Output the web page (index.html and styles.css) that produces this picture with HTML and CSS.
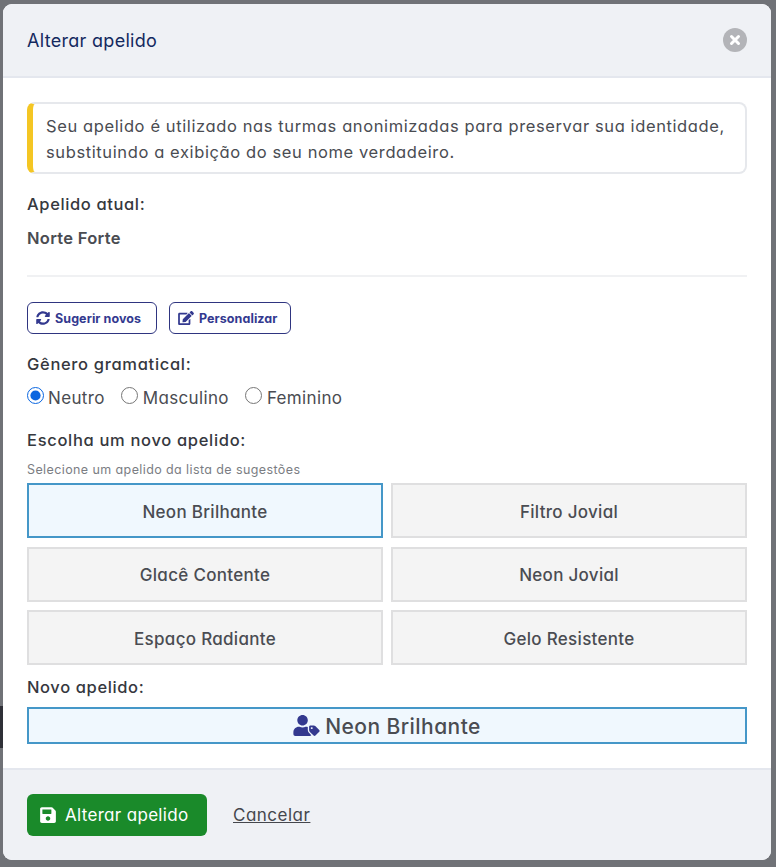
FILE: index.html
```html
<!DOCTYPE html>
<html lang="pt-BR">
<head>
<meta charset="utf-8">
<title>Alterar apelido</title>
<link rel="stylesheet" href="styles.css">
</head>
<body>
<div class="backdrop">
  <span class="behind"></span>
  <div class="dialog">
    <header class="dialog-header">
      <h1 class="dialog-title">Alterar apelido</h1>
      <span class="close"><svg viewBox="0 0 24 24" class="close-x"><path d="M8.5 8.5l7 7M15.5 8.5l-7 7"/></svg></span>
    </header>
    <main class="dialog-body">
      <div class="notice">Seu apelido é utilizado nas turmas anonimizadas para preservar sua identidade, substituindo a exibição do seu nome verdadeiro.</div>
      <div class="label current-label">Apelido atual:</div>
      <div class="current">Norte Forte</div>
      <hr class="rule">
      <div class="actions">
        <button class="outline s1"><svg class="ic" viewBox="0 0 512 512"><path d="M370.72 133.28C339.458 104.008 298.888 87.962 255.848 88c-77.458.068-144.328 53.178-162.791 126.85-1.344 5.363-6.122 9.15-11.651 9.15H24.103c-7.498 0-13.194-6.807-11.807-14.176C33.933 94.924 134.813 8 256 8c66.448 0 126.791 26.136 171.315 68.685L463.03 40.97C478.149 25.851 504 36.559 504 57.941V192c0 13.255-10.745 24-24 24H345.941c-21.382 0-32.09-25.851-16.971-40.971l41.75-41.749zM32 296h134.059c21.382 0 32.09 25.851 16.971 40.971l-41.75 41.75c31.262 29.273 71.835 45.319 114.876 45.28 77.418-.07 144.315-53.144 162.787-126.849 1.344-5.363 6.122-9.15 11.651-9.15h57.304c7.498 0 13.194 6.807 11.807 14.176C478.067 417.076 377.187 504 256 504c-66.448 0-126.791-26.136-171.315-68.685L48.97 471.03C33.851 486.149 8 475.441 8 454.059V320c0-13.255 10.745-24 24-24z"/></svg>Sugerir novos</button>
        <button class="outline s2"><svg class="ic ic-edit" viewBox="0 0 576 512"><path d="M402.6 83.2l90.2 90.2c3.8 3.8 3.8 10 0 13.8L274.4 405.6l-92.8 10.3c-12.4 1.4-22.9-9.1-21.5-21.5l10.3-92.8L388.8 83.2c3.8-3.8 10-3.8 13.8 0zm162-22.9l-48.8-48.8c-15.2-15.2-39.9-15.2-55.2 0l-35.4 35.4c-3.8 3.8-3.8 10 0 13.8l90.2 90.2c3.8 3.8 10 3.8 13.8 0l35.4-35.4c15.2-15.3 15.2-40 0-55.2zM384 346.2V448H64V128h229.8c3.2 0 6.2-1.3 8.5-3.5l40-40c7.6-7.6 2.2-20.5-8.5-20.5H48C21.5 64 0 85.5 0 112v352c0 26.5 21.5 48 48 48h352c26.5 0 48-21.5 48-48V306.2c0-10.7-12.9-16-20.5-8.5l-40 40c-2.2 2.3-3.5 5.3-3.5 8.5z"/></svg>Personalizar</button>
      </div>
      <div class="label gender-label">Gênero gramatical:</div>
      <div class="radios">
        <label class="radio"><input type="radio" name="g" checked>Neutro</label>
        <label class="radio"><input type="radio" name="g">Masculino</label>
        <label class="radio"><input type="radio" name="g">Feminino</label>
      </div>
      <div class="label choose-label">Escolha um novo apelido:</div>
      <div class="hint">Selecione um apelido da lista de sugestões</div>
      <div class="grid">
        <div class="option selected">Neon Brilhante</div>
        <div class="option">Filtro Jovial</div>
        <div class="option">Glacê Contente</div>
        <div class="option">Neon Jovial</div>
        <div class="option">Espaço Radiante</div>
        <div class="option">Gelo Resistente</div>
      </div>
      <div class="label new-label">Novo apelido:</div>
      <div class="preview"><svg class="ic-user" viewBox="0 0 640 512"><path d="M630.6 364.9l-90.3-90.2c-12-12-28.3-18.7-45.3-18.7h-79.3c-17.7 0-32 14.3-32 32v79.2c0 17 6.7 33.2 18.7 45.2l90.3 90.2c12.5 12.5 32.8 12.5 45.3 0l92.5-92.5c12.6-12.5 12.6-32.7.1-45.2zm-182.8-21c-13.3 0-24-10.7-24-24s10.7-24 24-24 24 10.7 24 24c0 13.2-10.7 24-24 24zm-223.8-88c70.7 0 128-57.3 128-128C352 57.3 294.7 0 224 0S96 57.3 96 128c0 70.6 57.3 127.9 128 127.9zm127.8 111.2V294c-12.2-3.6-24.9-6.2-38.2-6.2h-16.7c-22.2 10.2-46.9 16-72.9 16s-50.6-5.8-72.9-16h-16.7C60.2 287.9 0 348.1 0 422.3v41.6c0 26.5 21.5 48 48 48h352c15.5 0 29.1-7.4 37.9-18.9l-58-58c-18.1-18.1-28.1-42.2-28.1-67.9z"/></svg>Neon Brilhante</div>
    </main>
    <footer class="dialog-footer">
      <button class="primary"><svg class="ic-save" viewBox="0 0 448 512"><path d="M433.941 129.941l-83.882-83.882A48 48 0 0 0 316.118 32H48C21.49 32 0 53.49 0 80v352c0 26.51 21.49 48 48 48h352c26.51 0 48-21.49 48-48V163.882a48 48 0 0 0-14.059-33.941zM224 416c-35.346 0-64-28.654-64-64 0-35.346 28.654-64 64-64s64 28.654 64 64c0 35.346-28.654 64-64 64zm96-304.52V212c0 6.627-5.373 12-12 12H76c-6.627 0-12-5.373-12-12V108c0-6.627 5.373-12 12-12h228.52c3.183 0 6.235 1.264 8.485 3.515l3.48 3.48A11.996 11.996 0 0 1 320 111.48z"/></svg>Alterar apelido</button>
      <a class="cancel" href="#">Cancelar</a>
    </footer>
  </div>
</div>
</body>
</html>
```
FILE: styles.css
```css
* { box-sizing: border-box; }
html, body { margin: 0; height: 100%; }
body { font-family: Inter, "Noto Sans", sans-serif; font-feature-settings: "cv11" 1; color: #45474d; background: #707277; overflow: hidden; }
.backdrop { position: relative; height: 867px; padding: 4px 5px 7px 3px; }
.behind { position: absolute; left: 0; top: 706px; width: 3px; height: 42px; background: #2f3037; }
.dialog { height: 856px; background: #fff; border-radius: 9px; display: flex; flex-direction: column; overflow: hidden; }
.dialog-header { height: 74px; flex: none; background: #eff1f5; border-bottom: 2px solid #e4e7ee; padding: 0 24px; display: flex; align-items: center; justify-content: space-between; }
.dialog-title { margin: 0; font-size: 18px; font-weight: 400; color: #14295f; letter-spacing: .3px; }
.close { width: 24px; height: 24px; border-radius: 50%; background: #b3b4b8; display: flex; }
.close-x { width: 24px; height: 24px; fill: none; stroke: #fff; stroke-width: 3; stroke-linecap: round; }
.dialog-body { flex: 1; padding: 24px 24px 0; }
.notice { height: 72px; border: 2px solid #e6e8ec; border-left: 6px solid #f4c623; border-radius: 8px; padding: 9px 10px 0 13px; font-size: 16.5px; line-height: 26px; color: #4a4c52; letter-spacing: .61px; }
.label { font-size: 16.5px; font-weight: 500; line-height: 24px; color: #36383e; letter-spacing: .62px; }
.current-label { margin-top: 18px; }
.current { margin-top: 10px; font-size: 16.5px; font-weight: 600; line-height: 24px; color: #4a4c52; letter-spacing: .3px; }
.rule { margin: 25px 0 0; border: 0; height: 2px; background: #f0f1f3; }
.actions { display: flex; gap: 12px; margin-top: 25px; }
.outline { height: 32px; background: #fff; border: 1px solid #2f3580; border-radius: 6px; color: #33398f; font: 700 12.5px Inter, sans-serif; font-feature-settings: "cv11" 1; letter-spacing: .08px; display: flex; align-items: center; justify-content: flex-start; padding: 0 0 0 8px; }
.s1 { width: 130px; }
.s2 { width: 122px; }
.ic { width: 14px; height: 14px; fill: #33398f; margin-right: 5px; }
.ic-edit { width: 16px; }
.gender-label { margin-top: 18px; }
.gender-label, .choose-label { letter-spacing: .68px; }
.radios { display: flex; gap: 16px; margin-top: 10px; height: 24px; }
.radio { display: flex; align-items: center; font-size: 17px; color: #4a4c52; letter-spacing: .35px; }
.radio input { width: 17px; height: 17px; margin: 0 4px 0 0; accent-color: #0a66e0; position: relative; top: -3px; }
.radio:nth-child(n+2) input { margin-right: 5px; }
.choose-label { margin-top: 18px; }
.hint { margin-top: 8px; font-size: 12.5px; line-height: 20px; color: #7b7d83; letter-spacing: .4px; }
.grid { display: grid; grid-template-columns: 1fr 1fr; gap: 8.5px 8px; margin-top: 3px; }
.option { height: 55px; padding-top: 2px; background: #f4f4f4; border: 2px solid #dfdfe0; display: flex; align-items: center; justify-content: center; font-size: 17px; font-weight: 500; color: #4a4c52; letter-spacing: .3px; }
.option.selected { background: #f0f8fe; border-color: #4597c8; }
.new-label { margin-top: 10px; }
.preview { height: 37px; padding-top: 2px; margin-top: 8px; background: #f0f8fe; border: 2px solid #4597c8; display: flex; align-items: center; justify-content: center; font-size: 21px; font-weight: 500; color: #4a4c52; letter-spacing: .45px; }
.ic-user { width: 27px; height: 21px; fill: #33398f; margin: -2px 5px 0 0; }
.dialog-footer { height: 92px; flex: none; background: #eff1f5; border-top: 2px solid #e4e7ee; padding: 24px 24px 0; display: flex; gap: 26px; align-items: flex-start; }
.primary { height: 42px; width: 180px; background: #1a8a2a; border: 0; border-radius: 6px; color: #fff; font: 400 17px Inter, sans-serif; font-feature-settings: "cv11" 1; letter-spacing: .32px; display: flex; align-items: center; justify-content: flex-start; padding: 0 0 0 13px; }
.ic-save { width: 16px; height: 18px; fill: #fff; margin-right: 9px; }
.cancel { margin-top: 9px; font-size: 17px; line-height: 24px; color: #45474d; letter-spacing: .5px; }
```
